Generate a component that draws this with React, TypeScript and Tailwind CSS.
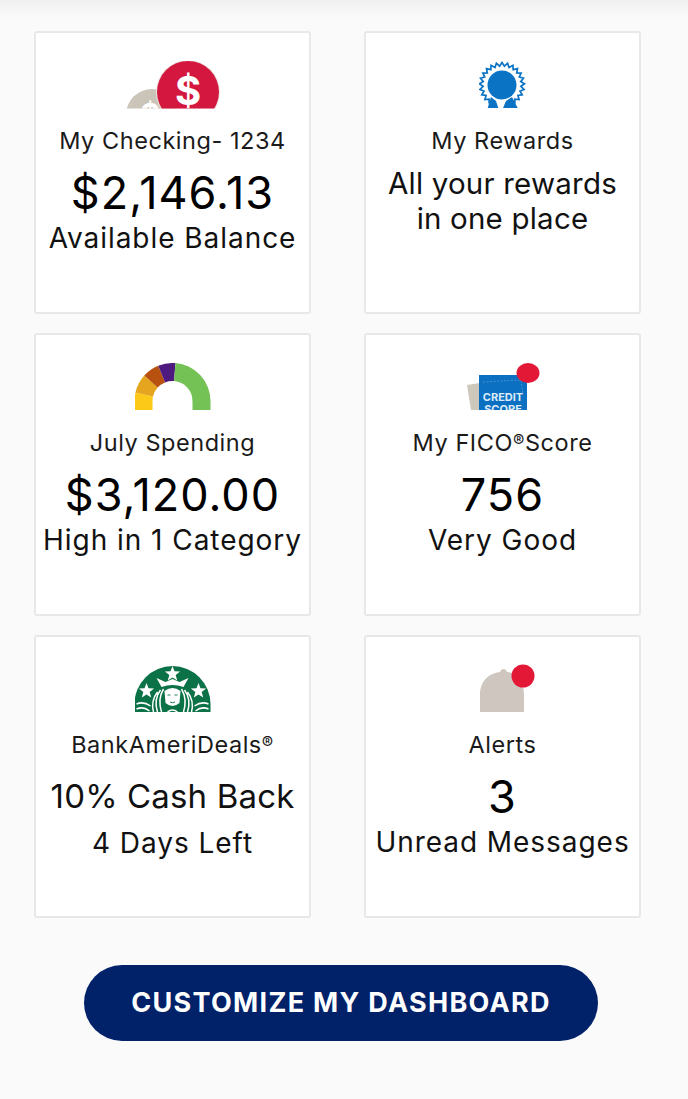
import type { ReactNode } from "react";

const CheckingIcon = () => (
  <svg width="100" height="48" viewBox="0 0 100 48" className="block">
    <defs>
      <clipPath id="coinClip">
        <rect x="0" y="0" width="100" height="47.500" />
      </clipPath>
    </defs>
    <g clipPath="url(#coinClip)">
      <circle cx="29" cy="54" r="26" fill="#cbc4b8" />
      <text x="27" y="64" textAnchor="middle" fontSize="30" fontWeight="700" fill="#fff" fontFamily="Inter, sans-serif">$</text>
      <circle cx="65" cy="31" r="32" fill="#e8e4de" />
      <circle cx="65" cy="31" r="31" fill="#d4173f" />
      <text x="65" y="44" textAnchor="middle" fontSize="40" fontWeight="700" fill="#fff" fontFamily="Inter, sans-serif">$</text>
    </g>
  </svg>
);

// zigzag edge runs round the top and stops where the ribbons start
const rewardPoints = Array.from({ length: 41 }, (_, i) => {
  const a = ((125 + (i / 40) * 290) * Math.PI) / 180;
  const r = i % 2 === 0 ? 22.500 : 19;
  return `${(23 + Math.cos(a) * r).toFixed(1)},${(24 + Math.sin(a) * r).toFixed(1)}`;
}).join(" ");

const RewardsIcon = () => (
  <svg width="48" height="48" viewBox="0 0 48 48" className="block">
    <polyline points={rewardPoints} fill="none" stroke="#0a73c4" strokeWidth="1.700" />
    <path d="M12 36 L8.700 47 L19.300 47 L17 40 Z" fill="#0a73c4" />
    <path d="M33 36 L38.700 47 L24 47 L27 40 Z" fill="#0a73c4" />
    <circle cx="23" cy="24" r="14.500" fill="#0a73c4" />
  </svg>
);

const arc = (from: number, to: number) => {
  const ro = 38;
  const ri = 20;
  const cx = 38;
  const cy = 38;
  const pt = (r: number, deg: number) => {
    const t = (deg * Math.PI) / 180;
    return `${(cx - Math.cos(t) * r).toFixed(2)} ${(cy - Math.sin(t) * r).toFixed(2)}`;
  };
  return `M${pt(ro, from)} A${ro} ${ro} 0 0 1 ${pt(ro, to)} L${pt(ri, to)} A${ri} ${ri} 0 0 0 ${pt(ri, from)} Z`;
};

const SpendingIcon = () => (
  <svg width="76" height="48" viewBox="0.500 0 76 48" className="block">
    <rect x="0" y="37.500" width="18" height="9.500" fill="#fdc918" />
    <rect x="58" y="37.500" width="18" height="9.500" fill="#74c256" />
    <path d={arc(0, 13)} fill="#fdc918" />
    <path d={arc(13, 42)} fill="#e5a51e" />
    <path d={arc(42, 68)} fill="#b8510f" />
    <path d={arc(68, 94.500)} fill="#4f1a80" />
    <path d={arc(94.500, 180)} fill="#74c256" />
  </svg>
);

const ScoreIcon = () => (
  <svg width="76" height="48" viewBox="0 0 76 48" className="block">
    <defs>
      <clipPath id="scoreClip">
        <rect x="0" y="0" width="76" height="47" />
      </clipPath>
    </defs>
    <path d="M2 22 L15 20 L15 47 L6 47 Z" fill="#cdc7bc" />
    <rect x="14" y="12" width="48" height="35" fill="#0b6fc2" />
    <path d="M18 19 L56 17 L58 32" fill="none" stroke="#5d9fd8" strokeWidth="0.700" strokeDasharray="2 1.500" />
    <g clipPath="url(#scoreClip)">
      <text x="38" y="38" textAnchor="middle" fontSize="11" fontWeight="700" fill="#dcebf8" fontFamily="Inter, sans-serif">CREDIT</text>
      <text x="38" y="50" textAnchor="middle" fontSize="11" fontWeight="700" fill="#dcebf8" fontFamily="Inter, sans-serif">SCORE</text>
    </g>
    <ellipse cx="63" cy="10" rx="11.500" ry="10" fill="#e31837" />
  </svg>
);

const star = (cx: number, cy: number, r: number) =>
  Array.from({ length: 10 }, (_, i) => {
    const a = (i / 10) * Math.PI * 2 - Math.PI / 2;
    const d = i % 2 === 0 ? r : r * 0.42;
    return `${(cx + Math.cos(a) * d).toFixed(1)},${(cy + Math.sin(a) * d).toFixed(1)}`;
  }).join(" ");

const DealsIcon = () => (
  <svg width="76" height="48" viewBox="0.500 0 76 48" className="block">
    <path d="M0 47 V39 A38 38 0 0 1 76 39 V47 Z" fill="#0b7146" />
    <polygon points={star(38, 9, 8)} fill="#fff" />
    <polygon points={star(12, 26, 8)} fill="#fff" />
    <polygon points={star(64, 26, 8)} fill="#fff" />
    <path d="M22 13 L31 17 L38 14 L45 17 L54 13 L49 22 Q38 18 27 22 Z" fill="#fff" />
    <path d="M30 26 Q38 20 46 26 L45 38 Q38 44 31 38 Z" fill="#fff" />
    <path d="M33 30 H36 M40 30 H43 M35.500 37 Q38 38.500 40.500 37" stroke="#0b7146" strokeWidth="0.900" fill="none" />
    <path d="M29 24 Q23 34 27 47 M26 25 Q19 34 23 47 M23 27 Q16 36 19 47 M47 24 Q53 34 49 47 M50 25 Q57 34 53 47 M53 27 Q60 36 57 47" stroke="#fff" strokeWidth="1.500" fill="none" />
    <path d="M2 39 Q9 36 16 41 M2 44 Q9 41 15 46 M60 41 Q67 36 74 39 M61 46 Q67 41 74 44" stroke="#fff" strokeWidth="1.500" fill="none" />
    <path d="M33 47 Q38 43 43 47" stroke="#fff" strokeWidth="1.500" fill="none" />
  </svg>
);

const AlertsIcon = () => (
  <svg width="60" height="48" viewBox="0 0 60 48" className="block overflow-visible">
    <path d="M7 47 V30 C7 15 17 8 27 7 C28 3 33 3 34 7 C44 8 51 15 51 30 V47 Z" fill="#cec6bf" />
    <circle cx="50" cy="11" r="11.500" fill="#e31837" />
  </svg>
);

type TileProps = {
  icon: ReactNode;
  label: ReactNode;
  children: ReactNode;
};

const Tile = ({ icon, label, children }: TileProps) => (
  <div className="h-[283px] flex flex-col items-center rounded-[3px] border-2 border-[#e8e8e8] bg-white pt-[28px] text-black">
    <div className="h-[48px] flex justify-center">{icon}</div>
    <p className="mt-[18px] text-[23.500px] leading-[28px] tracking-[0.55px] text-[#1a1a1a] whitespace-nowrap">{label}</p>
    {children}
  </div>
);

const Big = ({ children }: { children: ReactNode }) => (
  <p className="mt-[11px] text-[45px] leading-[54px] tracking-[1px] whitespace-nowrap">{children}</p>
);

const Sub = ({ children }: { children: ReactNode }) => (
  <p className="mt-[1px] text-[28px] leading-[34px] tracking-[0.95px] text-[#111] whitespace-nowrap">{children}</p>
);

const Reg = () => <span className="text-[17px] align-[4px] leading-none">®</span>;

export default function App() {
  return (
    <div className="min-h-[1099px] bg-[#fafafa] bg-gradient-to-b from-[#efefef] to-[#fafafa] bg-[length:100%_16px] bg-no-repeat pt-[31px] font-['Inter','Liberation_Sans',sans-serif]">
      <div className="grid grid-cols-[277px_277px] gap-x-[53px] gap-y-[19px] pl-[34px]">
        <Tile icon={<CheckingIcon />} label="My Checking- 1234">
          <Big>$2,146.13</Big>
          <Sub>Available Balance</Sub>
        </Tile>
        <Tile icon={<RewardsIcon />} label="My Rewards">
          <p className="mt-[11px] text-center text-[29.500px] leading-[35px] tracking-[0.2px] text-[#111]">
            All your rewards
            <br />
            in one place
          </p>
        </Tile>
        <Tile icon={<SpendingIcon />} label="July Spending">
          <Big>$3,120.00</Big>
          <Sub>High in 1 Category</Sub>
        </Tile>
        <Tile
          icon={<ScoreIcon />}
          label={
            <>
              My FICO
              <Reg />
              Score
            </>
          }
        >
          <Big>756</Big>
          <Sub>Very Good</Sub>
        </Tile>
        <Tile
          icon={<DealsIcon />}
          label={
            <>
              BankAmeriDeals
              <Reg />
            </>
          }
        >
          <p className="mt-[17px] text-[33px] leading-[40px] tracking-[0.15px] whitespace-nowrap text-[#111]">10% Cash Back</p>
          <p className="mt-[10px] text-[28px] leading-[34px] tracking-[0.95px] whitespace-nowrap text-[#111]">4 Days Left</p>
        </Tile>
        <Tile icon={<AlertsIcon />} label="Alerts">
          <Big>3</Big>
          <Sub>Unread Messages</Sub>
        </Tile>
      </div>
      <div className="mt-[47px] pl-[84px]">
        <button className="w-[514px] h-[76px] rounded-[38px] bg-[#012169] text-white text-[27px] font-bold tracking-[1.3px] whitespace-nowrap">
          CUSTOMIZE MY DASHBOARD
        </button>
      </div>
    </div>
  );
}
